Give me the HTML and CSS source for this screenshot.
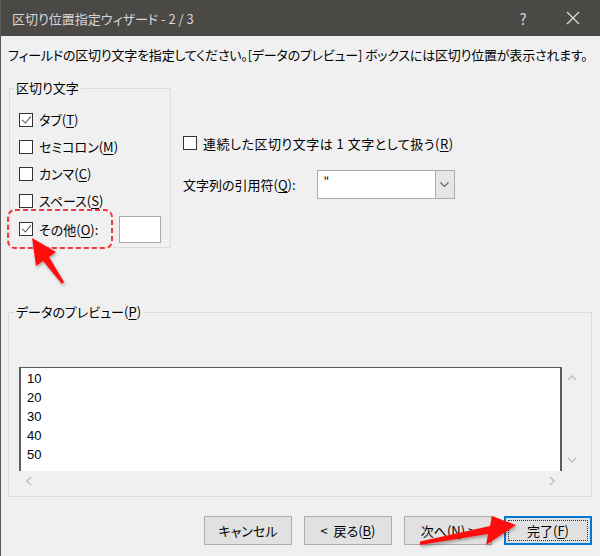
FILE: index.html
```html
<!DOCTYPE html>
<html lang="ja">
<head>
    <meta charset="UTF-8">
    <title>区切り位置指定ウィザード</title>
    <link rel="stylesheet" href="styles.css">
</head>
<body>
    <div class="window">
        <div class="titlebar">
            <span class="title">区切り位置指定ウィザード - 2 / 3</span>
            <span class="help">?</span>
            <span class="close">
                <svg width="14" height="14" viewBox="0 0 14 14"><path d="M1 1 L13 13 M13 1 L1 13" stroke="#dcdcdc" stroke-width="1.3" fill="none"/></svg>
            </span>
        </div>

        <div class="content">
            <p class="desc">フィールドの区切り文字を指定してください。[データのプレビュー] ボックスには区切り位置が表示されます。</p>

            <div class="options">
                <fieldset class="group delims">
                    <legend>区切り文字</legend>
                    <div class="check"><span class="box checked"></span>タブ(<u>T</u>)</div>
                    <div class="check"><span class="box"></span>セミコロン(<u>M</u>)</div>
                    <div class="check"><span class="box"></span>カンマ(<u>C</u>)</div>
                    <div class="check"><span class="box"></span>スペース(<u>S</u>)</div>
                    <div class="check other"><span class="box checked"></span>その他(<u>O</u>):<span class="textbox"></span></div>
                </fieldset>

                <div class="side">
                    <div class="check wide"><span class="box"></span>連続した区切り文字は 1 文字として扱う(<u>R</u>)</div>
                    <div class="quote-row">
                        <span>文字列の引用符(<u>Q</u>):</span>
                        <div class="combo">
                            <span class="combo-value">"</span>
                            <span class="combo-btn">
                                <svg width="9" height="6" viewBox="0 0 9 6"><path d="M0.5 0.5 L4.5 4.5 L8.5 0.5" stroke="#606060" stroke-width="1.1" fill="none"/></svg>
                            </span>
                        </div>
                    </div>
                </div>
            </div>

            <fieldset class="group preview">
                <legend>データのプレビュー(<u>P</u>)</legend>
                <div class="scroller">
                    <div class="data">10<br>20<br>30<br>40<br>50</div>
                    <div class="vbar">
                        <svg width="10" height="6" viewBox="0 0 10 6"><path d="M1 5 L5 1 L9 5" stroke="#c2c2c2" stroke-width="1.6" fill="none"/></svg>
                        <svg width="10" height="6" viewBox="0 0 10 6"><path d="M1 1 L5 5 L9 1" stroke="#c2c2c2" stroke-width="1.6" fill="none"/></svg>
                    </div>
                    <div class="hbar">
                        <svg width="6" height="10" viewBox="0 0 6 10"><path d="M5 1 L1 5 L5 9" stroke="#c2c2c2" stroke-width="1.6" fill="none"/></svg>
                        <svg width="6" height="10" viewBox="0 0 6 10"><path d="M1 1 L5 5 L1 9" stroke="#c2c2c2" stroke-width="1.6" fill="none"/></svg>
                    </div>
                </div>
            </fieldset>

            <div class="buttons">
                <button class="btn">キャンセル</button>
                <button class="btn">&lt;&nbsp; 戻る(<u>B</u>)</button>
                <button class="btn">次へ(<u>N</u>) &gt;</button>
                <button class="btn default"><span>完了(<u>F</u>)</span></button>
            </div>
        </div>

        <!-- annotations drawn over the dialog -->
        <svg class="annot" width="600" height="556" viewBox="0 0 600 556">
            <defs>
                <filter id="shadow" x="-20%" y="-20%" width="140%" height="140%">
                    <feDropShadow dx="1" dy="2" stdDeviation="1.5" flood-color="#000" flood-opacity="0.3"/>
                </filter>
            </defs>
            <rect x="8" y="210" width="104" height="38" rx="7" fill="none" stroke="#f03a3a" stroke-width="2" stroke-dasharray="5 3"/>
            <polygon points="32,238 56,252 49,257 64,282 62,284 43,261 36,266" fill="#ff1010" filter="url(#shadow)"/>
            <polygon points="420,541.5 490,526 492,516 516,525 486,545 488,534 420,545" fill="#ff1010" filter="url(#shadow)"/>
        </svg>
    </div>
</body>
</html>
```

FILE: styles.css
```css
* {
    box-sizing: border-box;
}

body {
    margin: 0;
    font-family: "Noto Sans CJK JP", "Noto Sans", sans-serif;
    font-feature-settings: "palt";
    font-size: 13px;
    color: #000;
}

.window {
    position: relative;
    width: 600px;
    height: 556px;
    background: #f0f0f0;
    border-left: 1px solid #5a5a5a;
    overflow: hidden;
}

.titlebar {
    height: 36px;
    background: #4b4946;
    color: #d6d6d6;
    display: flex;
    align-items: center;
    padding-left: 11px;
}

.title {
    font-size: 13px;
    flex: 1;
}

.help {
    font-size: 15px;
    width: 20px;
    text-align: center;
    margin-right: 33px;
}

.close {
    display: flex;
    margin-right: 20px;
}

.content {
    padding: 0 8px 0 7px;
}

.desc {
    margin: 10px 0 0;
    line-height: 18px;
    white-space: nowrap;
    letter-spacing: -0.2px;
}

u {
    text-decoration: underline;
    text-underline-offset: 2px;
}

/* group boxes */
.group {
    margin: 0;
    border: 1px solid #dcdcdc;
    min-width: 0;
}

.group legend {
    line-height: 18px;
    padding: 0 2px;
}

.options {
    display: flex;
    margin-top: 15px;
}

.delims {
    width: 162px;
    margin-left: 1px;
    padding: 9px 4px 3px 9px;
}

.delims legend {
    margin-left: -5px;
}

.check {
    display: flex;
    align-items: center;
    height: 27px;
    white-space: nowrap;
}

.check.other {
    height: 30px;
}

.box {
    width: 14px;
    height: 14px;
    border: 1px solid #333;
    background: #fff;
    margin-right: 6px;
    flex: none;
    position: relative;
}

.box.checked::after {
    content: "";
    position: absolute;
    left: 4px;
    top: 0px;
    width: 4px;
    height: 8px;
    border: solid #555;
    border-width: 0 1.5px 1.5px 0;
    transform: rotate(40deg);
}

.textbox {
    width: 42px;
    height: 27px;
    background: #fff;
    border: 1px solid #a9a9a9;
    margin-left: 21px;
}

.side {
    padding: 54px 0 0 12px;
}

.side .check {
    height: 20px;
}

.check.wide {
    letter-spacing: 0.5px;
}

.quote-row {
    display: flex;
    align-items: center;
    margin-top: 17px;
}

.combo {
    display: flex;
    width: 138px;
    height: 29px;
    margin-left: 21px;
    background: #fff;
    border: 1px solid #acacac;
}

.combo-value {
    flex: 1;
    padding: 2px 0 0 6px;
    font-size: 12px;
}

.combo-btn {
    width: 19px;
    background: #e6e6e6;
    border-left: 1px solid #acacac;
    display: flex;
    align-items: center;
    justify-content: center;
}

/* preview */
.preview {
    margin-top: 55px;
    width: 584px;
    padding: 46px 9px 5px 10px;
}

.preview legend {
    margin-left: -5px;
}

.scroller {
    display: grid;
    grid-template-columns: 1fr 20px;
    grid-template-rows: 104px 20px;
}

.data {
    background: #fff;
    border: solid #5c5c5c;
    border-width: 1px 2px 0 2px;
    padding: 1px 0 0 6px;
    font-family: "Liberation Sans", Arial, sans-serif;
    font-size: 13px;
    line-height: 19px;
}

.vbar {
    display: flex;
    flex-direction: column;
    justify-content: space-between;
    align-items: center;
    padding: 8px 0 8px;
}

.hbar {
    display: flex;
    justify-content: space-between;
    align-items: center;
    padding: 0 7px 0 7px;
}

/* buttons */
.buttons {
    display: flex;
    justify-content: flex-end;
    gap: 12px;
    margin-top: 19px;
    padding-right: 0;
}

.btn {
    width: 88px;
    height: 29px;
    font-family: inherit;
    font-feature-settings: "palt";
    font-size: 13px;
    background: #e1e1e1;
    border: 1px solid #adadad;
    color: #000;
    padding: 0;
}

.btn.default {
    border: 2px solid #0078d7;
    padding: 2px;
}

.btn.default span {
    display: flex;
    align-items: center;
    justify-content: center;
    height: 100%;
    border: 1px dotted #333;
}

.annot {
    position: absolute;
    left: -1px;
    top: 0;
    pointer-events: none;
}
```
